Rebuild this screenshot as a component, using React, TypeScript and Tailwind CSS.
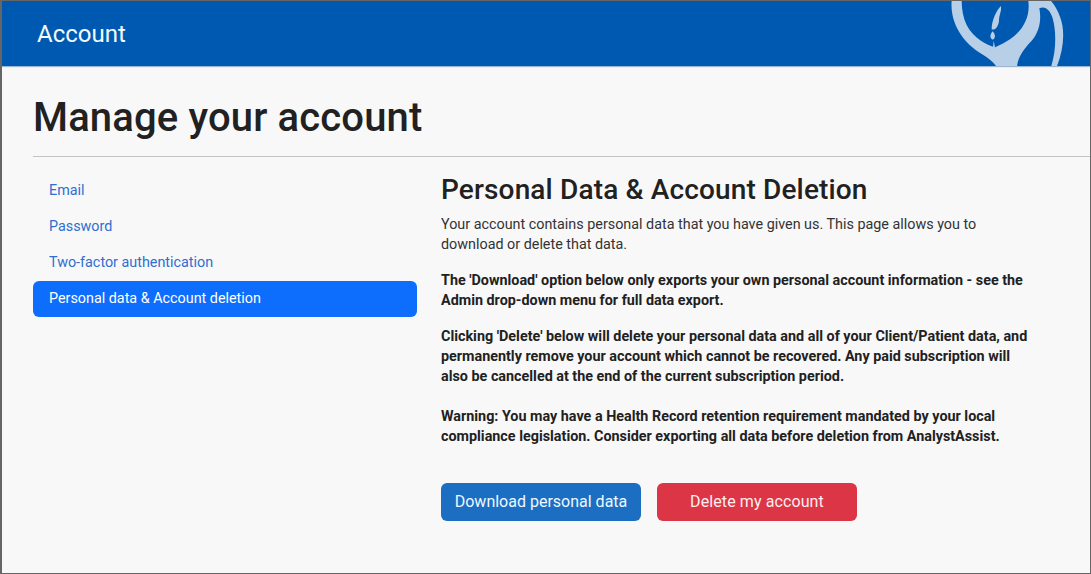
const links = ["Email", "Password", "Two-factor authentication"];

function Logo() {
  return (
    <svg viewBox="0 3 375 198" className="absolute right-5 top-0 h-[66px] w-[125px]">
      <path
        fill="#b7cfe7"
        fillRule="evenodd"
        d="M20 3C15 60 45 125 115 165C132 175 147 188 155 201L335 201C355 150 362 95 345 50C338 30 328 14 318 3L250 3C256 50 235 90 195 118C180 128 165 135 150 142C125 135 85 115 65 75C55 55 50 30 50 3Z M283 25C300 16 316 30 323 55C334 95 334 150 318 201L216 201C218 170 238 145 260 122C283 95 290 60 283 25Z"
      />
      <path
        fill="#b7cfe7"
        d="M168 18C155 30 140 60 140 88C150 92 160 80 162 62C162 45 170 35 168 18Z M143 94C134 103 134 116 143 119C152 116 152 103 143 94Z M146 122L150 142L144 142Z"
      />
    </svg>
  );
}

export default function App() {
  return (
    <div className="h-[574px] w-[1091px] overflow-hidden border-y border-l-2 border-r border-[#666] bg-[#f8f8f9] font-['Roboto',sans-serif] text-[#212121]">
      <header className="relative flex h-[65px] items-center overflow-hidden bg-[#0059b0] pl-[35px] shadow-[0_1px_1px_#9db8d4]">
        <span className="text-2xl leading-none text-[#f2fbff]">Account</span>
        <Logo />
      </header>

      <div className="pl-[31px]">
        <h1 className="mt-7 h-[62px] text-[40px] leading-[48px] font-medium tracking-[0.15px]">Manage your account</h1>
        <hr className="border-[#c4c4c4]" />

        <div className="mt-4 flex">
          <nav className="flex w-[384px] flex-col text-[14.35px]">
            {links.map((l) => (
              <a key={l} className="flex h-9 items-center px-4 pb-px text-[#2f6fd0]">
                {l}
              </a>
            ))}
            <a className="flex h-9 items-center rounded-md bg-[#0d6efd] px-4 pb-px text-white">Personal data &amp; Account deletion</a>
          </nav>

          <main className="ml-6 w-[590px] text-[14.35px] leading-5">
            <h2 className="mt-px mb-[9px] text-[28px] leading-8 font-medium tracking-[0.15px]">Personal Data &amp; Account Deletion</h2>
            <p className="mb-4 text-[#333]">
              Your account contains personal data that you have given us. This page allows you to download or delete that data.
            </p>
            <p className="mb-4 font-bold">
              The 'Download' option below only exports your own personal account information - see the Admin drop-down menu for full data export.
            </p>
            <p className="mb-5 font-bold">
              Clicking 'Delete' below will delete your personal data and all of your Client/Patient data, and permanently remove your account which cannot be recovered. Any paid subscription will also be cancelled at the end of the current subscription period.
            </p>
            <p className="font-bold">
              Warning: You may have a Health Record retention requirement mandated by your local compliance legislation. Consider exporting all data before deletion from AnalystAssist.
            </p>
            <div className="mt-9 flex gap-4 text-base">
              <button className="h-[38px] w-[200px] rounded-md bg-[#1b6ec2] text-[#eef8ff]">Download personal data</button>
              <button className="h-[38px] w-[200px] rounded-md bg-[#dc3545] tracking-[0.1px] text-[#fdeef0]">Delete my account</button>
            </div>
          </main>
        </div>
      </div>
    </div>
  );
}
